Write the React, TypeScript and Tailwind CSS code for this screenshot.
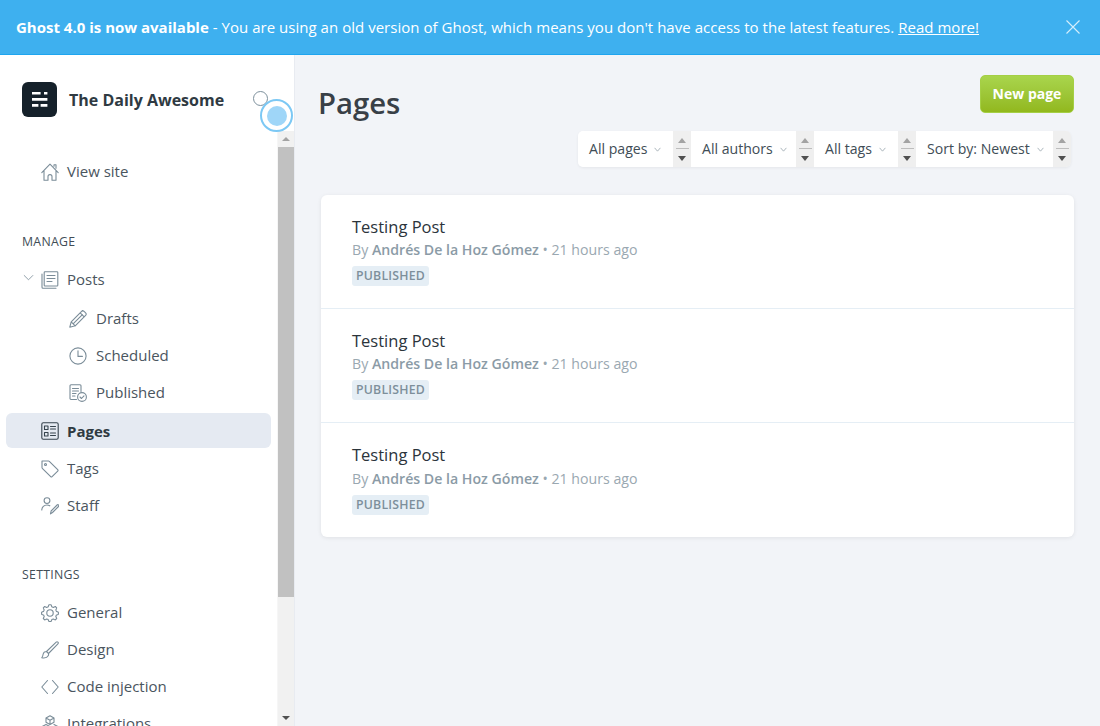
import React from "react";

const S = (p: React.SVGProps<SVGSVGElement>) => (
  <svg viewBox="0 0 18 18" fill="none" stroke="#7a8c98" strokeWidth="1.1" strokeLinecap="round" strokeLinejoin="round" className="w-[18px] h-[18px] shrink-0" {...p} />
);
const icons: Record<string, React.ReactNode> = {
  home: <S><path d="M.8 9.6 9 1.2l8.2 8.4M3 7.6v9.6h4v-3.6a2 2 0 0 1 4 0v3.6h4V7.6M13 3.2V1.8h2v3.4" /></S>,
  posts: <S><path d="M1 3v13.2a1 1 0 0 0 1 1h13" /><rect x="3.2" y=".8" width="13.6" height="14.2" rx=".8" /><path d="M6 4.5h8M6 7.5h8M6 10.5h5" /></S>,
  drafts: <S><path d="m.8 17.2 1.4-5.4L12.6 1.4a1.8 1.8 0 0 1 2.5 0l1.5 1.5a1.8 1.8 0 0 1 0 2.5L6.2 15.8.8 17.2ZM2.2 11.8l4 4M11.2 2.8l4 4M4.2 9.8l9.6-9.6M8.2 13.8l8.4-8.4M4.6 13.4l8.8-8.8" /></S>,
  clock: <S><circle cx="9" cy="9" r="8.1" /><path d="M9 3.8v5.6h4.4" /></S>,
  published: <S><path d="M7.5 15.5H2a1 1 0 0 1-1-1V1.8a1 1 0 0 1 1-1h9a1 1 0 0 1 1 1v5.7M3.5 4.5h6M3.5 7h6M3.5 9.5h3.5M3.5 12h2.5" /><circle cx="13" cy="13" r="4.4" /><path d="m11 13 1.5 1.5 2.5-2.7" /></S>,
  pages: <S stroke="#36434d"><rect x=".8" y=".8" width="16.4" height="16.4" rx="1.5" /><rect x="3.5" y="4" width="3.5" height="3.5" /><rect x="3.5" y="10.5" width="3.5" height="3.5" /><path d="M9.5 4.5h5M9.5 7h5M9.5 11h5M9.5 13.5h5" /></S>,
  tag: <S><path d="M1 1h6.6a1 1 0 0 1 .7.3l8.4 8.4a1 1 0 0 1 0 1.4l-5.6 5.6a1 1 0 0 1-1.4 0L1.3 8.3a1 1 0 0 1-.3-.7V1Z" /><circle cx="4.5" cy="4.5" r="1" /></S>,
  staff: <S><circle cx="6" cy="3.6" r="2.9" /><path d="M.8 13c0-3 2.3-5 5.2-5 1 0 2 .3 2.8.8M9.5 16.9l.6-2.9 6-6a1 1 0 0 1 1.4 0 1.1 1.1 0 0 1 0 1.5l-6 6-2 1.4Z" /></S>,
  gear: <S><circle cx="9" cy="9" r="3.2" /><path d="M7.5 1.8 8 .8h2l.5 1 .3 1 1.5.6 1-.5 1-.4 1.4 1.4-.4 1-.5 1 .6 1.5 1 .3 1 .5v2l-1 .5-1 .3-.6 1.5.5 1 .4 1-1.4 1.4-1-.4-1-.5-1.5.6-.3 1-.5 1H8l-.5-1-.3-1-1.5-.6-1 .5-1 .4-1.4-1.4.4-1 .5-1-.6-1.5-1-.3-1-.5v-2l1-.5 1-.3.6-1.5-.5-1-.4-1 1.4-1.4 1 .4 1 .5 1.5-.6.3-1Z" /></S>,
  brush: <S><path d="M5.5 10.5 15.2 1.2a1.2 1.2 0 0 1 1.7 1.7L7.5 12.5ZM5.5 10.5c-2 0-3 1-3.3 2.5-.2 1.3-.6 2.6-1.4 3.8 2.5.4 5.5-.2 6.4-2 .5-1 .5-1.5.3-2.3" /></S>,
  code: <S><path d="M6.5 2.5 .8 9l5.7 6.5M11.5 2.5 17.2 9l-5.7 6.5" /></S>,
  integ: <S><path d="M9 .8l4 2.2v4.2L9 9.4 5 7.2V3ZM5 3l4 2.2L13 3M9 5.2v4.2M5 9.4l4 2.2v4.2l-4 2-4-2v-4.2ZM13 9.4l4 2.2v4.2l-4 2-4-2" /></S>,
};

function Nav({ icon, label, active, sub, chevron }: { icon: string; label: string; active?: boolean; sub?: boolean; chevron?: boolean }) {
  return (
    <div className={`relative flex items-center ml-[6px] w-[265px] ${sub ? "pl-[63px]" : "pl-[35px]"} ${active ? "bg-[#e5eaf2] rounded-[6px] h-[35px]" : "h-[37px]"}`}>
      {chevron && (
        <svg viewBox="0 0 12 12" className="absolute left-[17px] top-[11px] w-[11px] h-[11px]" fill="none" stroke="#7a8c98" strokeWidth="0.9"><path d="M1 3.5 6 8.5 11 3.5" /></svg>
      )}
      {icons[icon]}
      <span className={`${sub ? "ml-[9px]" : "ml-[8px]"} text-[15px] ${active ? "font-bold text-[#2f3a42] pt-[2px]" : "text-[#4a555e]"}`}>{label}</span>
    </div>
  );
}

function Select({ label, w }: { label: string; w: string }) {
  return (
    <div className="flex h-full">
      <div className={`flex items-center pl-[11px] bg-white text-[14.1px] text-[#414d56] ${w}`}>
        <span>{label}</span>
        <svg viewBox="0 0 8 6" className="ml-[7px] w-[7px] h-[5px]" fill="none" stroke="#9aa7b0" strokeWidth="1"><path d="M.5 1 4 5l3.5-4" /></svg>
      </div>
      <div className="w-[18px] bg-[#efefef] flex flex-col items-center">
        <div className="mt-[7px] w-0 h-0 border-x-[4px] border-x-transparent border-b-[5px] border-b-[#a3a3a3]" />
        <div className="mt-[5px] w-[13px] h-px bg-[#bdbdbd]" />
        <div className="mt-[7px] w-0 h-0 border-x-[4px] border-x-transparent border-t-[5px] border-t-[#505050]" />
      </div>
    </div>
  );
}

function Row({ last, h }: { last?: boolean; h: string }) {
  return (
    <div className={`${h} pl-[31px] pt-[20px] ${last ? "" : "border-b border-[#e5eef5]"}`}>
      <div className="text-[16.5px] leading-[24px] text-[#2b343b]">Testing Post</div>
      <div className={`${last ? "mt-[2px]" : "mt-[1px]"} text-[14.15px] leading-[20px] text-[#9aa8b1]`}>
        By <span className="font-semibold text-[#8b9ba6]">Andrés De la Hoz Gómez</span> • 21 hours ago
      </div>
      <div className="mt-[6px] w-[77px] h-[20px] pt-px flex items-center justify-center rounded-[3px] bg-[#e5eef5] text-[12.3px] font-semibold text-[#7d8f9b] tracking-[0.2px]">PUBLISHED</div>
    </div>
  );
}

export default function App() {
  return (
    <div className="w-[1100px] h-[726px] overflow-hidden flex flex-col bg-[#f2f4f8] font-['Open_Sans','Noto_Sans',sans-serif]">
      <div className="h-[55px] shrink-0 flex items-center justify-between pl-[16px] pr-[20px] bg-[#3eb0ef] border-b border-[#1ea5ef] text-white text-[15px]">
        <div className="tracking-[0.03px]">
          <b className="tracking-normal">Ghost 4.0 is now available</b> - You are using an old version of Ghost, which means you don't have access to the latest features. <u>Read more!</u>
        </div>
        <svg viewBox="0 0 14 14" className="w-[14px] h-[14px]" fill="none" stroke="#d6eefb" strokeWidth="1.1"><path d="M.5.5l13 13M13.5.5l-13 13" /></svg>
      </div>
      <div className="flex flex-1 min-h-0">
        <div className="relative w-[295px] shrink-0 bg-white border-r border-[#e8ebf1] flex flex-col">
          <div className="h-[76px] shrink-0 pl-[22px] pt-[27px] flex items-start">
            <svg viewBox="0 0 35 35" className="w-[35px] h-[35px]">
              <rect width="35" height="35" rx="6" fill="#15212a" />
              <path d="M10 11.3h8.6M22 11.3h3.4M10 17.4h15.4M10 23.4h6.4M18.6 23.4h6.8" stroke="#fff" strokeWidth="2.6" fill="none" />
            </svg>
            <div className="ml-[12px] mt-[6px] text-[16px] font-bold leading-[24px] text-[#2f3a42]">The Daily Awesome</div>
          </div>
          <div className="flex-1 min-h-0 overflow-hidden flex">
            <div className="flex-1 min-w-0 pt-[22px]">
              <Nav icon="home" label="View site" />
              <div className="mt-[42px] pl-[22px] h-[20px] leading-[20px] text-[12.3px] text-[#414d56] tracking-[0.3px]">MANAGE</div>
              <div className="mt-[9px]"><Nav icon="posts" label="Posts" chevron /></div>
              <div className="mt-[2px]"><Nav icon="drafts" label="Drafts" sub /></div>
              <Nav icon="clock" label="Scheduled" sub />
              <Nav icon="published" label="Published" sub />
              <div className="mt-[2px] mb-[2px]"><Nav icon="pages" label="Pages" active /></div>
              <Nav icon="tag" label="Tags" />
              <Nav icon="staff" label="Staff" />
              <div className="mt-[41px] pl-[22px] h-[20px] leading-[20px] text-[12.3px] text-[#414d56] tracking-[0.3px]">SETTINGS</div>
              <div className="mt-[9px]"><Nav icon="gear" label="General" /></div>
              <Nav icon="brush" label="Design" />
              <Nav icon="code" label="Code injection" />
              <Nav icon="integ" label="Integrations" />
            </div>
            <div className="w-[17px] shrink-0 bg-[#f1f1f1] flex flex-col items-center border-l border-[#f6f6f6]">
              <div className="h-[16px] shrink-0 flex items-center justify-center"><div className="w-0 h-0 border-x-[4px] border-x-transparent border-b-[4px] border-b-[#a3a3a3]" /></div>
              <div className="w-full h-[450px] shrink-0 bg-[#c1c1c1]" />
              <div className="mt-auto h-[16px] shrink-0 flex items-center justify-center"><div className="w-0 h-0 border-x-[4px] border-x-transparent border-t-[4px] border-t-[#505050]" /></div>
            </div>
          </div>
          <svg viewBox="0 0 8 6" className="absolute left-[266px] top-[49px] w-[8px] h-[6px]" fill="none" stroke="#a9b6be" strokeWidth="1"><path d="M0 0l8 6" /></svg>
          <div className="absolute left-[253px] top-[36px] w-[15px] h-[15px] rounded-full border-[1.5px] border-[#7d909c]" />
          <div className="absolute left-[260px] top-[44px] w-[33px] h-[33px] rounded-full border-2 border-[#7cc8f4] bg-white flex items-center justify-center">
            <div className="w-[20px] h-[20px] rounded-full bg-[#9fd6f8]" />
          </div>
        </div>
        <div className="flex-1 min-w-0 pl-[24px] pr-[26px]">
          <div className="flex justify-between items-start pt-[20px]">
            <div className="text-[29.3px] font-semibold leading-[40px] text-[#394047] mt-[8px] ml-[-1px]">Pages</div>
            <div className="w-[94px] h-[38px] pb-px rounded-[5px] bg-gradient-to-b from-[#a9d54c] to-[#92b81d] border border-[#a5cf45] flex items-center justify-center text-white font-bold text-[14px]">New page</div>
          </div>
          <div className="flex justify-end mt-[8px] h-[36px] mr-[3px]">
            <div className="flex h-full rounded-[5px] overflow-hidden shadow-[0_1px_3px_rgba(0,0,0,0.06)]">
              <Select label="All pages" w="w-[95px]" />
              <Select label="All authors" w="w-[105px]" />
              <Select label="All tags" w="w-[84px]" />
              <Select label="Sort by: Newest" w="w-[137px]" />
            </div>
          </div>
          <div className="mt-[28px] ml-[2px] w-[753px] bg-white rounded-[6px] shadow-[0_1px_4px_rgba(0,0,0,0.08)]">
            <Row h="h-[114px]" />
            <Row h="h-[114px]" />
            <Row h="h-[114px]" last />
          </div>
        </div>
      </div>
    </div>
  );
}
